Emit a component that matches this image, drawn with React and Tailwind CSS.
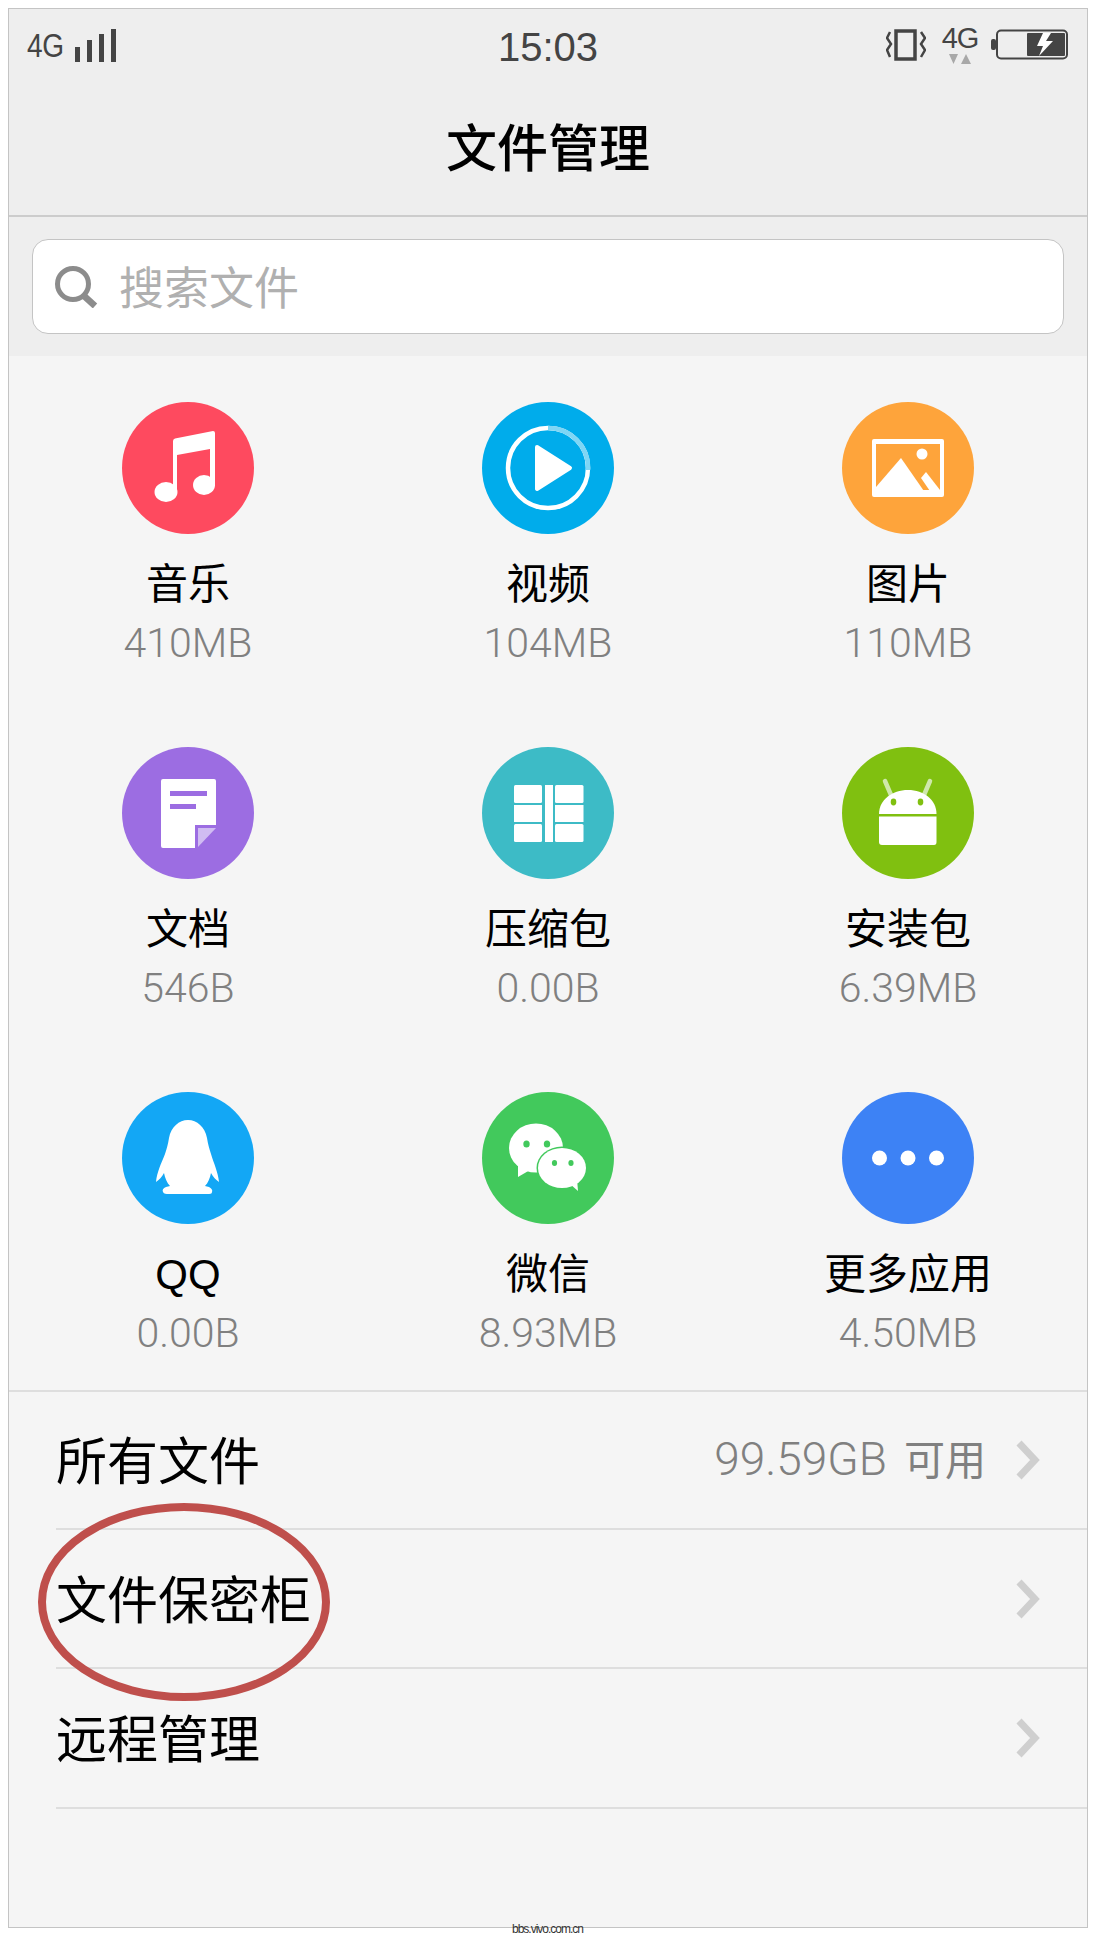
const CJK = "font-['Liberation_Sans','Noto_Sans_CJK_SC',sans-serif]"

function MusicIcon() {
  return (
    <>
      <path d="M51 39 Q51 37 53 36.5 L91 29 Q93 29 93 31 V84 H88 V47 L55 53 V91 H51 Z" fill="#fff" />
      <ellipse cx="44" cy="90" rx="11.5" ry="10" fill="#fff" />
      <ellipse cx="82" cy="83" rx="11" ry="10" fill="#fff" />
    </>
  )
}

function VideoIcon() {
  return (
    <>
      <circle cx="66" cy="66" r="40" fill="none" stroke="#fff" strokeWidth="4.5" />
      <path d="M66 26 A40 40 0 0 1 106 68" fill="none" stroke="#7fd6f5" strokeWidth="4.5" />
      <path d="M55 45 L88 66 L55 87 Z" fill="#fff" stroke="#fff" strokeWidth="4" strokeLinejoin="round" />
    </>
  )
}

function PictureIcon({ bg }) {
  return (
    <>
      <rect x="30" y="37" width="72" height="58" rx="2" fill="#fff" />
      <rect x="34" y="42" width="64" height="46" fill={bg} />
      <circle cx="80" cy="52" r="5.5" fill="#fff" />
      <path d="M34 85 L59 56 L84 92 H34 Z" fill="#fff" />
      <path d="M79 76 L84 70 L98 88 V92 H90 Z" fill="#fff" />
    </>
  )
}

function DocIcon() {
  return (
    <>
      <path d="M39 34 Q39 32 41 32 H92 Q94 32 94 34 V78 H73 V101 H41 Q39 101 39 99 Z" fill="#fff" />
      <path d="M76 81 H94 L76 100 Z" fill="#d0bcf2" />
      <rect x="48" y="44" width="37" height="5" fill="#9c6de2" />
      <rect x="48" y="57" width="26" height="5" fill="#9c6de2" />
    </>
  )
}

function ZipIcon() {
  return (
    <g fill="#fff">
      <rect x="32" y="38" width="28" height="18" rx="1.5" />
      <rect x="32" y="58" width="28" height="17" />
      <rect x="32" y="77" width="28" height="18" rx="1.5" />
      <rect x="63" y="38" width="8" height="57" />
      <rect x="73" y="38" width="28.5" height="18" rx="1.5" />
      <rect x="73" y="58" width="28.5" height="17" />
      <rect x="73" y="77" width="28.5" height="18" rx="1.5" />
    </g>
  )
}

function AndroidIcon({ bg }) {
  return (
    <>
      <path d="M43 34 L49 48 M88 34 L82 48" stroke="#cfe8ab" strokeWidth="4.5" strokeLinecap="round" fill="none" />
      <path d="M37 67 C37 53 50 43 66 43 C82 43 94.5 53 94.5 67 Z" fill="#fff" />
      <path d="M37 69.5 H94.5 V95 Q94.5 98 92 98 H40 Q37 98 37 95 Z" fill="#fff" />
      <ellipse cx="51.5" cy="55" rx="2.8" ry="3.4" fill={bg} />
      <ellipse cx="78.5" cy="55" rx="2.8" ry="3.4" fill={bg} />
    </>
  )
}

function QQIcon() {
  return (
    <path
      d="M66 28 C57 28 49 35 47 46 C46 52 45 56 43 62 C39 72 35 80 34 90 C37 88 40 85 42 81 C43 86 45 91 48 94 L44 95 C41 96 40 98 41 100 C42 102 44 102 47 102 L85 102 C88 102 90 102 90 100 C91 98 89 96 87 95 L83 94 C86 91 88 86 89 81 C91 85 94 88 97 90 C96 80 92 72 89 62 C87 56 86 52 85 46 C83 35 75 28 66 28 Z"
      fill="#fff"
    />
  )
}

function WechatIcon({ bg }) {
  return (
    <>
      <ellipse cx="54" cy="56" rx="27" ry="24.5" fill="#fff" />
      <path d="M36 72 L36 85 L48 78 Z" fill="#fff" />
      <ellipse cx="80" cy="76" rx="25.5" ry="21.5" fill={bg} />
      <ellipse cx="80" cy="76" rx="24" ry="20" fill="#fff" />
      <path d="M88 92 L96 99 L95 87 Z" fill="#fff" />
      <ellipse cx="44.5" cy="52" rx="3.2" ry="3.6" fill={bg} />
      <ellipse cx="65" cy="52" rx="3.2" ry="3.6" fill={bg} />
      <ellipse cx="72.5" cy="71" rx="2.6" ry="3" fill={bg} />
      <ellipse cx="89" cy="71" rx="2.6" ry="3" fill={bg} />
    </>
  )
}

function MoreIcon() {
  return (
    <g fill="#fff">
      <circle cx="37.5" cy="66" r="7.5" />
      <circle cx="66" cy="66" r="7.5" />
      <circle cx="94.5" cy="66" r="7.5" />
    </g>
  )
}

const categories = [
  { name: '音乐', size: '410MB', bg: '#fe4a5f', Icon: MusicIcon },
  { name: '视频', size: '104MB', bg: '#00aceb', Icon: VideoIcon },
  { name: '图片', size: '110MB', bg: '#fea43b', Icon: PictureIcon },
  { name: '文档', size: '546B', bg: '#9c6de2', Icon: DocIcon },
  { name: '压缩包', size: '0.00B', bg: '#3dbbc6', Icon: ZipIcon },
  { name: '安装包', size: '6.39MB', bg: '#80c010', Icon: AndroidIcon },
  { name: 'QQ', size: '0.00B', bg: '#13a7f5', Icon: QQIcon },
  { name: '微信', size: '8.93MB', bg: '#42c95c', Icon: WechatIcon },
  { name: '更多应用', size: '4.50MB', bg: '#3d82f5', Icon: MoreIcon },
]

const rows = [
  { label: '所有文件', free: '99.59GB', unit: '可用', height: 'h-[137.6px]' },
  { label: '文件保密柜', height: 'h-[139.5px]' },
  { label: '远程管理', height: 'h-[139.5px]' },
]

function Chevron() {
  return (
    <svg width="24" height="42" viewBox="0 0 24 42" className="shrink-0">
      <path d="M3 4 L19 21 L3 38" fill="none" stroke="#cfcfcf" strokeWidth="7" />
    </svg>
  )
}

function StatusBar() {
  return (
    <div className="flex h-[57px] items-start justify-between pr-[18px] pl-[18px] text-[#444]">
      <div className="flex w-[200px] items-end pt-[20px]">
        <span className="w-[36px] origin-left scale-x-[0.85] font-['Liberation_Sans',sans-serif] text-[33px] leading-[34px] tracking-[-0.5px]">4G</span>
        <svg width="42" height="33" viewBox="0 0 42 33" className="mb-[1px] ml-[12px]">
          <rect x="0" y="18" width="5" height="15" fill="#444" />
          <rect x="12" y="11" width="5" height="22" fill="#444" />
          <rect x="24" y="5" width="5" height="28" fill="#444" />
          <rect x="36" y="0" width="5" height="33" fill="#444" />
        </svg>
      </div>
      <span className="pt-[15px] font-['Liberation_Sans',sans-serif] text-[40px] leading-[46px]">15:03</span>
      <div className="flex w-[200px] items-start justify-end pt-[18px]">
        <svg width="40" height="32" viewBox="0 0 40 32" className="mt-[2px]">
          <rect x="10" y="2" width="19" height="28" fill="none" stroke="#444" strokeWidth="3.5" />
          <path d="M4 3 L1 9 L5 15 L1 21 L4 28 M35 3 L39 9 L35 15 L39 21 L35 28" fill="none" stroke="#444" strokeWidth="2.5" />
        </svg>
        <div className="ml-[15px] flex w-[38px] flex-col items-center">
          <span className="font-['Liberation_Sans',sans-serif] text-[29px] leading-[22px] tracking-[-1px]">4G</span>
          <svg width="24" height="11" viewBox="0 0 24 11" className="mt-[5px]">
            <path d="M1 0 H10 L5.5 10 Z M13 10 H23 L18 0 Z" fill="#a8a8a8" />
          </svg>
        </div>
        <svg width="78" height="32" viewBox="0 0 78 32" className="mt-[2px] ml-[12px]">
          <rect x="0" y="10" width="5" height="11" rx="2" fill="#444" />
          <rect x="6" y="1.5" width="70" height="28" rx="4" fill="none" stroke="#444" strokeWidth="2" />
          <rect x="36" y="4" width="38" height="23" rx="1" fill="#444" />
          <path d="M46 17 L52 4 L60 4 L55 12 L62 12 L48 27 L52 17 Z" fill="#fff" />
        </svg>
      </div>
    </div>
  )
}

export default function App() {
  return (
    <div className={`relative h-[1936px] w-full bg-white p-2 ${CJK}`}>
      <div className="relative h-[1920px] w-full overflow-hidden border border-[#c4c4c4] bg-[#f5f5f5]">
        {/* Header */}
        <div className="h-[208px] border-b-2 border-[#cccccc] bg-[#eeeeee]">
          <StatusBar />
          <h1 className="pt-[54px] text-center text-[51px] leading-[60px] font-medium text-black">文件管理</h1>
        </div>

        {/* Search */}
        <div className="h-[139px] bg-[#eeeeee] px-[23px] pt-[22px]">
          <div className="flex h-[95px] items-center rounded-[16px] border border-[#c4c4c4] bg-white pl-[21px]">
            <svg width="44" height="42" viewBox="0 0 44 42">
              <circle cx="19" cy="18" r="15.5" fill="none" stroke="#8c8c8c" strokeWidth="5" />
              <path d="M29 29 L41 40" stroke="#8c8c8c" strokeWidth="6.5" />
            </svg>
            <span className="mt-[6px] ml-[21px] text-[45px] leading-[60px] text-[#b0b0b0]">搜索文件</span>
          </div>
        </div>

        {/* Categories */}
        <div className="-mx-[1px] grid grid-cols-3 border-b-2 border-[#dedede]">
          {categories.map(({ name, size, bg, Icon }) => (
            <div key={name} className="flex h-[344.8px] flex-col items-center pt-[46px]">
              <svg width="132" height="132" viewBox="0 0 132 132">
                <circle cx="66" cy="66" r="66" fill={bg} />
                <Icon bg={bg} />
              </svg>
              <span className="mt-[27px] text-[42px] leading-[48px] text-black">{name}</span>
              <span className="mt-[10px] font-['Roboto',sans-serif] text-[41px] leading-[48px] font-light text-[#808080]">{size}</span>
            </div>
          ))}
        </div>

        {/* List */}
        <div className="pl-[47px]">
          {rows.map((r) => (
            <div key={r.label} className={`flex ${r.height} items-center justify-between border-b-2 border-[#dedede] pr-[47px]`}>
              <span className="mt-[6px] text-[51px] leading-[60px] text-black">{r.label}</span>
              <div className="flex items-center gap-[30px]">
                {r.free && (
                  <span className="flex items-baseline gap-[17px] leading-[48px] text-[#808080]">
                    <span className="font-['Roboto',sans-serif] text-[46px] font-light">{r.free}</span>
                    <span className="text-[41px]">{r.unit}</span>
                  </span>
                )}
                <Chevron />
              </div>
            </div>
          ))}
        </div>

        {/* Hand-drawn annotation */}
        <svg width="300" height="208" viewBox="0 0 300 208" className="absolute top-[1489px] left-[25px]">
          <ellipse cx="150" cy="104" rx="142" ry="95" fill="none" stroke="#bf4f4c" strokeWidth="8" />
        </svg>
      </div>
      <span className="absolute bottom-0 left-[512px] font-['Liberation_Sans',sans-serif] text-[12px] leading-[14px] tracking-[-1px] text-[#333]">bbs.vivo.com.cn</span>
    </div>
  )
}
